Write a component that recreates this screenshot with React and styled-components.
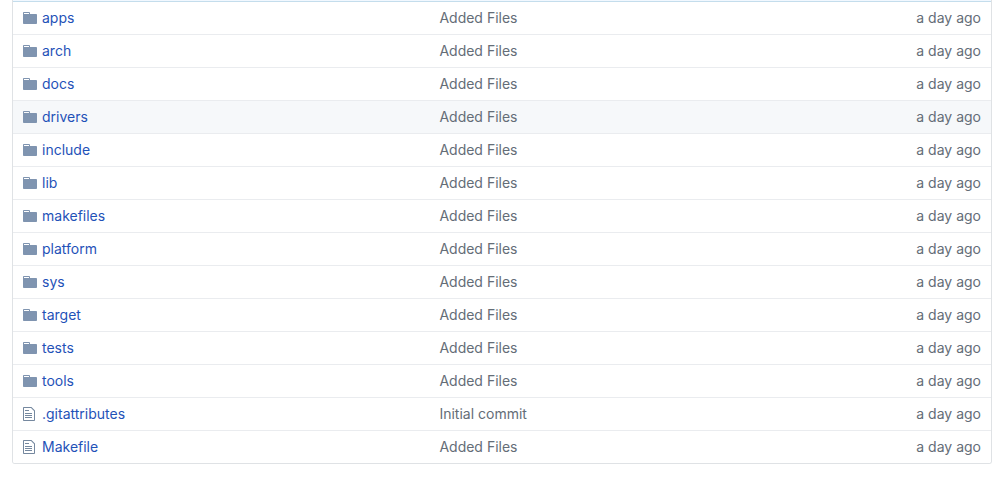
import React from "react";
import styled, { createGlobalStyle } from "styled-components";

const GlobalStyle = createGlobalStyle`
  body {
    margin: 0;
    background: #fff;
    color: #24292e;
    font: 14px/20px Inter, "Liberation Sans", sans-serif;
  }
`;

const Page = styled.main`
  padding: 0 14px 0 12px;
`;

const FileBox = styled.section`
  border: 1px solid #dfe2e5;
  border-top: 0;
  border-radius: 0 0 3px 3px;
  overflow: hidden;
`;

const CommitStrip = styled.div`
  height: 1px;
  background: #f1f8ff;
  border-bottom: 1px solid #c4ddec;
`;

const FileTable = styled.table`
  width: 100%;
  table-layout: fixed;
  border-collapse: separate;
  border-spacing: 0;
`;

const FileRow = styled.tr`
  background: ${({ $active }) => ($active ? "#f6f8fa" : "#fff")};

  &:not(:first-child) > td {
    border-top: 1px solid #eaecef;
  }
`;

const Cell = styled.td`
  box-sizing: border-box;
  width: ${({ $width }) => $width || "auto"};
  padding: 6px 10px 6px 0;
  color: #646d77;
  text-align: ${({ $align }) => $align || "left"};
  white-space: nowrap;
`;

const NameCell = styled(Cell)`
  padding-left: 10px;
`;

const Entry = styled.div`
  display: flex;
  align-items: center;
  gap: 5px;
`;

const Icon = styled.svg`
  flex: none;
  width: 14px;
  height: 16px;
  fill: ${({ $folder }) => ($folder ? "#7f94b0" : "#75889f")};
`;

const FileLink = styled.a`
  color: #1f52b8;
  text-decoration: none;

  &:hover {
    text-decoration: underline;
  }
`;

const FOLDER =
  "M13 4H7V3c0-.66-.31-1-1-1H1c-.55 0-1 .45-1 1v10c0 .55.45 1 1 1h12c.55 0 1-.45 1-1V5c0-.55-.45-1-1-1zM6 4H1V3h5v1z";
const FILE =
  "M6 5H2V4h4v1zM2 8h7V7H2v1zm0 2h7V9H2v1zm0 2h7v-1H2v1zm10-7.5V14c0 .55-.45 1-1 1H1c-.55 0-1-.45-1-1V2c0-.55.45-1 1-1h7.5L12 4.5zM11 5L8 2H1v12h10V5z";

const folders = [
  "apps", "arch", "docs", "drivers", "include", "lib",
  "makefiles", "platform", "sys", "target", "tests", "tools",
];

const entries = [
  ...folders.map((name) => ({ name, folder: true, message: "Added Files" })),
  { name: ".gitattributes", message: "Initial commit" },
  { name: "Makefile", message: "Added Files" },
];

export default function App() {
  return (
    <Page>
      <GlobalStyle />
      <FileBox>
        <CommitStrip />
        <FileTable>
          <tbody>
            {entries.map(({ name, folder, message }) => (
              <FileRow key={name} $active={name === "drivers"}>
                <NameCell $width="43.6%">
                  <Entry>
                    <Icon viewBox="0 0 14 16" $folder={folder} aria-hidden="true">
                      <path d={folder ? FOLDER : FILE} />
                    </Icon>
                    <FileLink href={`#${name}`}>{name}</FileLink>
                  </Entry>
                </NameCell>
                <Cell>{message}</Cell>
                <Cell $width="125px" $align="right">a day ago</Cell>
              </FileRow>
            ))}
          </tbody>
        </FileTable>
      </FileBox>
    </Page>
  );
}
